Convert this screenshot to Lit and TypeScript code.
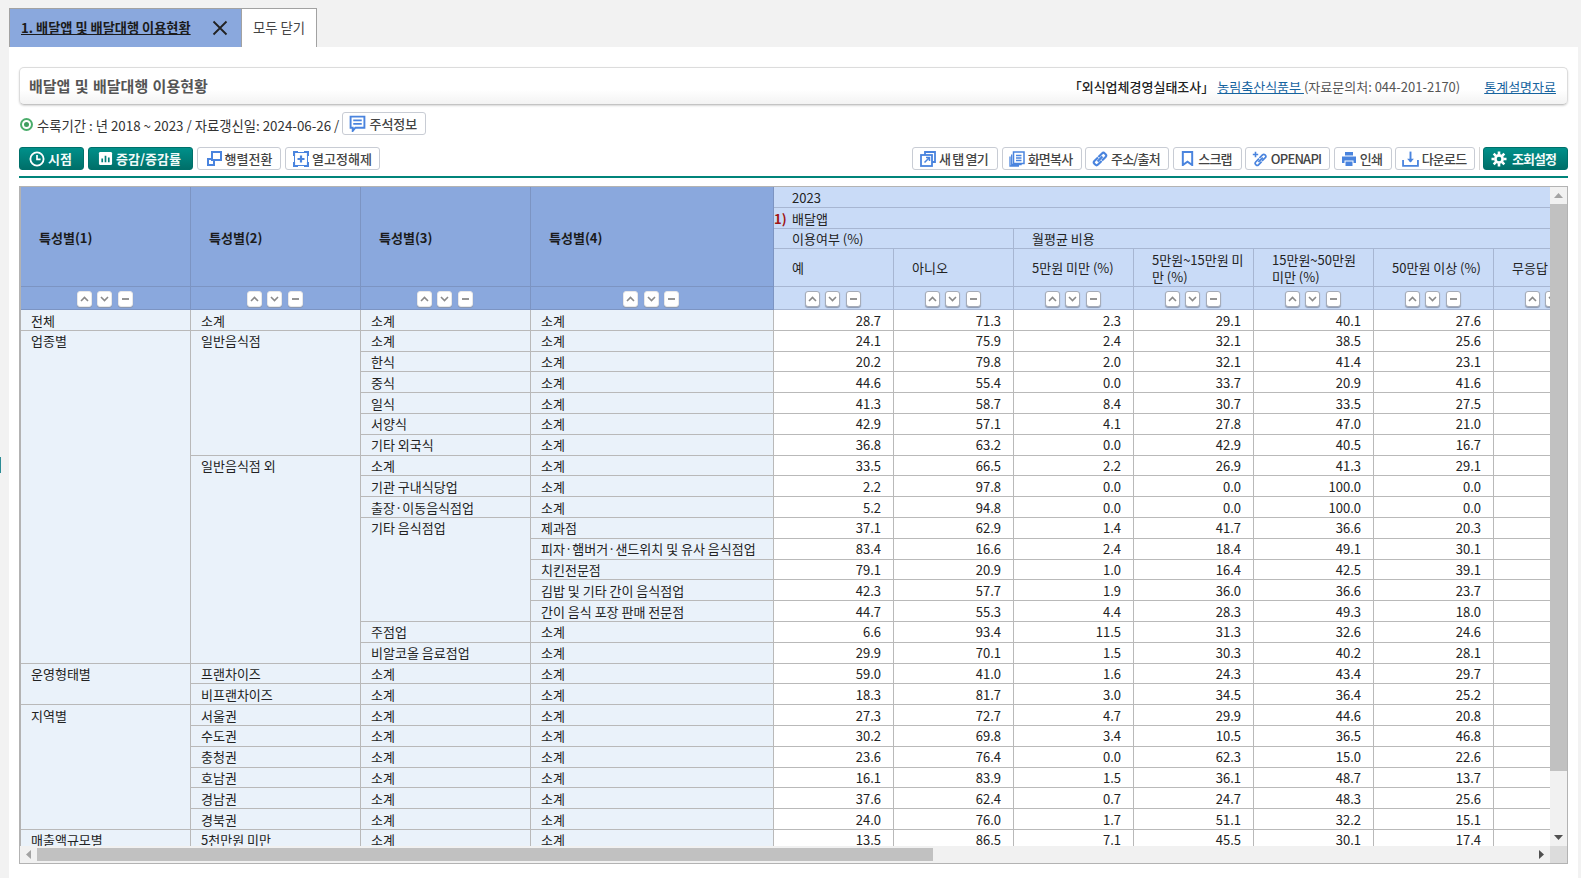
import { LitElement, html, css, svg } from "lit";
import { customElement } from "lit/decorators.js";

type Row = { c1?: [string, number]; c2?: [string, number]; c3?: [string, number]; c4: string; v: string };

const ROWS: Row[] = [
  { c1: ["전체", 1], c2: ["소계", 1], c3: ["소계", 1], c4: "소계", v: "28.7 71.3 2.3 29.1 40.1 27.6" },
  { c1: ["업종별", 16], c2: ["일반음식점", 6], c3: ["소계", 1], c4: "소계", v: "24.1 75.9 2.4 32.1 38.5 25.6" },
  { c3: ["한식", 1], c4: "소계", v: "20.2 79.8 2.0 32.1 41.4 23.1" },
  { c3: ["중식", 1], c4: "소계", v: "44.6 55.4 0.0 33.7 20.9 41.6" },
  { c3: ["일식", 1], c4: "소계", v: "41.3 58.7 8.4 30.7 33.5 27.5" },
  { c3: ["서양식", 1], c4: "소계", v: "42.9 57.1 4.1 27.8 47.0 21.0" },
  { c3: ["기타 외국식", 1], c4: "소계", v: "36.8 63.2 0.0 42.9 40.5 16.7" },
  { c2: ["일반음식점 외", 10], c3: ["소계", 1], c4: "소계", v: "33.5 66.5 2.2 26.9 41.3 29.1" },
  { c3: ["기관 구내식당업", 1], c4: "소계", v: "2.2 97.8 0.0 0.0 100.0 0.0" },
  { c3: ["출장·이동음식점업", 1], c4: "소계", v: "5.2 94.8 0.0 0.0 100.0 0.0" },
  { c3: ["기타 음식점업", 5], c4: "제과점", v: "37.1 62.9 1.4 41.7 36.6 20.3" },
  { c4: "피자·햄버거·샌드위치 및 유사 음식점업", v: "83.4 16.6 2.4 18.4 49.1 30.1" },
  { c4: "치킨전문점", v: "79.1 20.9 1.0 16.4 42.5 39.1" },
  { c4: "김밥 및 기타 간이 음식점업", v: "42.3 57.7 1.9 36.0 36.6 23.7" },
  { c4: "간이 음식 포장 판매 전문점", v: "44.7 55.3 4.4 28.3 49.3 18.0" },
  { c3: ["주점업", 1], c4: "소계", v: "6.6 93.4 11.5 31.3 32.6 24.6" },
  { c3: ["비알코올 음료점업", 1], c4: "소계", v: "29.9 70.1 1.5 30.3 40.2 28.1" },
  { c1: ["운영형태별", 2], c2: ["프랜차이즈", 1], c3: ["소계", 1], c4: "소계", v: "59.0 41.0 1.6 24.3 43.4 29.7" },
  { c2: ["비프랜차이즈", 1], c3: ["소계", 1], c4: "소계", v: "18.3 81.7 3.0 34.5 36.4 25.2" },
  { c1: ["지역별", 6], c2: ["서울권", 1], c3: ["소계", 1], c4: "소계", v: "27.3 72.7 4.7 29.9 44.6 20.8" },
  { c2: ["수도권", 1], c3: ["소계", 1], c4: "소계", v: "30.2 69.8 3.4 10.5 36.5 46.8" },
  { c2: ["충청권", 1], c3: ["소계", 1], c4: "소계", v: "23.6 76.4 0.0 62.3 15.0 22.6" },
  { c2: ["호남권", 1], c3: ["소계", 1], c4: "소계", v: "16.1 83.9 1.5 36.1 48.7 13.7" },
  { c2: ["경남권", 1], c3: ["소계", 1], c4: "소계", v: "37.6 62.4 0.7 24.7 48.3 25.6" },
  { c2: ["경북권", 1], c3: ["소계", 1], c4: "소계", v: "24.0 76.0 1.7 51.1 32.2 15.1" },
  { c1: ["매출액규모별", 1], c2: ["5천만원 미만", 1], c3: ["소계", 1], c4: "소계", v: "13.5 86.5 7.1 45.5 30.1 17.4" },
];

const B = "#4a84de";
const ic = (w: number, body: unknown) =>
  html`<svg class="ic" width=${w} height=${w} viewBox="0 0 16 16" fill="none">${body}</svg>`;

const ICONS: Record<string, unknown> = {
  clock: ic(16, svg`<circle cx="8" cy="8" r="6.6" stroke="#fff" stroke-width="1.8"/><path d="M8 4v4.4h3.6" stroke="#fff" stroke-width="1.7"/>`),
  chart: ic(15, svg`<rect x="1" y="1" width="14" height="14" rx="1.5" fill="#fff"/><path d="M4.500 12V8M8 12V5M11.500 12V7" stroke="#00807a" stroke-width="1.800"/>`),
  pivot: ic(16, svg`<rect x="6" y="1" width="9" height="8" stroke="${B}" stroke-width="2"/><path d="M1 15V7h4v2H3v4h4v-3h2v5z" fill="${B}"/>`),
  unfix: ic(16, svg`<rect x="1.500" y="1.500" width="13" height="13" stroke="${B}" stroke-width="1"/><path d="M1 5V1h4M11 1h4v4M15 11v4h-4M5 15H1v-4" stroke="${B}" stroke-width="2.200"/><path d="M8 4.500v7M4.500 8h7" stroke="${B}" stroke-width="2.200"/>`),
  note: ic(17, svg`<path d="M1.500 1.500h13v10.500H6l-2.500 3v-3h-2z" stroke="${B}" stroke-width="1.800"/><path d="M4 5h8M4 8.400h8" stroke="${B}" stroke-width="1.600"/>`),
  newtab: ic(16, svg`<path d="M5 4V1h10v10h-3" stroke="${B}" stroke-width="1.800"/><rect x="1" y="4" width="11" height="11" stroke="${B}" stroke-width="1.800"/><path d="M4.500 11.500 9 7M6 6.500h3.500V10" stroke="${B}" stroke-width="1.500"/>`),
  copy: ic(16, svg`<rect x="4.500" y="1" width="10.500" height="11.500" stroke="${B}" stroke-width="1.500"/><path d="M2.700 3.500v10h10M1 5.500V15h9" stroke="${B}" stroke-width="1.300"/><path d="M7 4.500h5.500M7 7h5.500M7 9.500h5.500" stroke="${B}" stroke-width="1.300"/>`),
  link: ic(16, svg`<path d="M6.400 6 10 2.400a2 2 0 0 1 2.800 0l.8.8a2 2 0 0 1 0 2.800L10 9.600M9.600 10 6 13.600a2 2 0 0 1-2.800 0l-.8-.8a2 2 0 0 1 0-2.800L6 6.400M5.600 10.400l4.800-4.800" stroke="${B}" stroke-width="2.100"/>`),
  bookmark: ic(15, svg`<path d="M3 1h10v14l-5-3.500L3 15z" stroke="${B}" stroke-width="2.100"/>`),
  api: ic(16, svg`<path d="M7.400 7 10.500 3.900a1.800 1.800 0 0 1 2.500 0l.3.3a1.800 1.800 0 0 1 0 2.500L10 10M9.600 10.600 6.500 13.800a1.800 1.800 0 0 1-2.500 0l-.3-.3a1.800 1.800 0 0 1 0-2.500L7 7.600M6.400 11l4.400-4.400" stroke="${B}" stroke-width="1.700"/><path d="M3.500.8v5.400M.8 3.500h5.400" stroke="${B}" stroke-width="1.600"/>`),
  print: ic(16, svg`<path d="M4 1h8v3.500H4z" fill="${B}"/><path d="M1 5.500h14v6.500h-2.500V9.500h-9V12H1z" fill="${B}"/><path d="M4.500 10.500h7v4.500h-7z" fill="${B}"/>`),
  down: ic(17, svg`<path d="M1 9.500V15h14V9.500" stroke="${B}" stroke-width="1.700"/><path d="M8 1.500v9.500" stroke="${B}" stroke-width="1.800"/><path d="M4.800 8.200 8 11.800l3.200-3.600z" fill="${B}"/>`),
  gear: ic(16, svg`<circle cx="8" cy="8" r="3.600" stroke="#fff" stroke-width="2.600"/><path d="M8 .5v3M8 12.500v3M.5 8h3M12.500 8h3M2.700 2.700l2.100 2.100M11.200 11.200l2.100 2.100M2.700 13.300l2.100-2.100M11.200 4.800l2.100-2.100" stroke="#fff" stroke-width="2.600"/>`),
};

const LEFT = [
  { t: "시점", i: "clock", w: 65, p: true },
  { t: "증감/증감률", i: "chart", w: 105, p: true },
  { t: "행렬전환", i: "pivot", w: 84 },
  { t: "열고정해제", i: "unfix", w: 95 },
];
const RIGHT = [
  { t: "새 탭 열기", i: "newtab", w: 86 },
  { t: "화면복사", i: "copy", w: 80 },
  { t: "주소/출처", i: "link", w: 84 },
  { t: "스크랩", i: "bookmark", w: 69 },
  { t: "OPENAPI", i: "api", w: 85 },
  { t: "인쇄", i: "print", w: 58 },
  { t: "다운로드", i: "down", w: 80 },
];

const sortBtns = html`<span class="sorts">
  <span class="sb"><svg width="9" height="6" viewBox="0 0 9 6"><path d="M1 5 4.500 1.500 8 5" fill="none" stroke="#8a8a8a" stroke-width="1.600"/></svg></span>
  <span class="sb"><svg width="9" height="6" viewBox="0 0 9 6"><path d="M1 1l3.500 3.500L8 1" fill="none" stroke="#8a8a8a" stroke-width="1.600"/></svg></span>
  <span class="sb"><svg width="9" height="4" viewBox="0 0 9 4"><path d="M1 2h7" stroke="#8a8a8a" stroke-width="1.800"/></svg></span>
</span>`;

const cols = ["예", "아니오", "5만원 미만 (%)", html`5만원~15만원 미<br />만 (%)`, html`15만원~50만원<br />미만 (%)`, "50만원 이상 (%)", "무응답 (%)"];

@customElement("app-root")
export class AppRoot extends LitElement {
  static styles = css`
    :host { display: block; height: 878px; background: #f2f2f2; font-family: "Noto Sans CJK KR", "Noto Sans", sans-serif; font-size: 13px; color: #222; overflow: hidden; position: relative; }
    .mark { position: absolute; left: 0; top: 457px; width: 1px; height: 16px; background: #2b8c96; }
    .tabs { display: flex; padding: 8px 0 0 9px; height: 39px; }
    .tab { box-sizing: border-box; height: 39px; display: flex; align-items: center; border: 1px solid #a2a2a2; border-bottom: 0; font-size: 13.33px; line-height: 18px; }
    .tab.on { width: 232px; background: #8aa8dd; padding-left: 11px; font-weight: 700; font-size: 13.2px; color: #1b1b1b; border-right: 0; justify-content: space-between; padding-right: 13px; }
    .tab.on span { text-decoration: underline; }
    .tab.off { width: 76px; background: #fff; color: #444; justify-content: center; }
    .panel { margin: 0 3px 0 9px; background: #fff; height: 831px; padding: 20px 10px 0; box-sizing: border-box; }
    .title { box-sizing: border-box; height: 38px; border: 1px solid #dcdcdc; border-bottom: 1px solid #c4c4c4; border-radius: 5px; background: linear-gradient(#fff 60%, #f3f3f3); box-shadow: 0 1px 2px #d8d8d8; display: flex; align-items: center; padding: 0 11px 0 9px; }
    .title h1 { margin: 0 0 1px; font-size: 15px; word-spacing: 1px; font-weight: 700; color: #555; flex: 1; line-height: 22px; }
    .title .src { font-weight: 500; color: #222; font-size: 13px; white-space: nowrap; }
    .title a { color: #17649f; text-decoration: underline; font-size: 13px; white-space: pre; }
    .title .contact { color: #555; margin-right: 24px; font-size: 13px; }
    .title .first { margin-left: 3px; }
    .info { display: flex; align-items: center; height: 23px; margin-top: 7px; padding-left: 1px; color: #333; font-size: 13.33px; white-space: nowrap; }
    .info .txt { padding-top: 3px; }
    .dot { width: 13px; height: 13px; border-radius: 50%; background: #4bad6b; display: flex; align-items: center; justify-content: center; margin: 2px 4px 0 0; }
    .dot i { display: block; width: 5px; height: 5px; border-radius: 50%; background: #3f9d5f; border: 2px solid #fff; }
    .info .btn { margin-left: 3px; width: 84px; height: 23px; padding-right: 2px; }
    .bar { display: flex; margin-top: 12px; height: 23px; }
    .bar .grp { display: flex; gap: 4px; }
    .bar .grp.r { gap: 3.5px; margin-left: auto; }
    .sep { width: 1px; height: 23px; background: #d6d6d6; margin: 0 3.5px; }
    .btn { box-sizing: border-box; height: 23px; border: 1px solid #c8ccd4; border-radius: 3px; background: #fff; display: inline-flex; align-items: center; justify-content: center; gap: 3px; font-size: 13px; font-weight: 500; color: #444; white-space: nowrap; line-height: 18px; }
    .grp.r .btn { letter-spacing: -0.8px; padding-right: 2px; }
    .btn.p { border-color: #00706a; background: linear-gradient(#00908a, #006f69); color: #f2fbfa; font-weight: 700; gap: 3px; padding-right: 2px; }
    .btn.setting { letter-spacing: -1px; padding-right: 4px; gap: 5px; }
    .ic { flex: none; display: block; }
    .rule { height: 2px; background: #00847a; margin-top: 6px; }
    .box { box-sizing: border-box; margin-top: 8px; height: 678px; border: 1px solid #b3b3b3; display: grid; grid-template-columns: 1fr 17px; grid-template-rows: 659px 17px; }
    .view { overflow: hidden; border-left: 1px solid #b3b3b3; min-width: 0; }
    table { border-collapse: separate; border-spacing: 0; table-layout: fixed; width: 1593px; }
    td, th { box-sizing: border-box; padding: 0; border-right: 1px solid #b9b9b9; border-bottom: 1px solid #b9b9b9; overflow: hidden; white-space: nowrap; font-weight: 400; line-height: 19px; vertical-align: middle; text-align: left; }
    tbody tr { height: 20.8px; }
    td.h, td.n { line-height: 18px; padding-top: 1.5px; vertical-align: top; }
    td.h { background: #eaf2fa; padding-left: 10px; color: #222; }
    td.n { text-align: right; padding-right: 12px; background: #fff; color: #222; font-size: 13px; }
    th.dk { background: #8aa8dd; border-color: #7c94c2; font-weight: 700; padding-left: 18px; padding-top: 2px; color: #1b1b1b; }
    th.lt { background: #c9dbf7; border-color: #a7b6d2; padding-left: 18px; color: #222; }
    th.ctl { padding: 2px 2px 0 0; text-align: center; line-height: 0; }
    th.lbl { line-height: 17px; }
    .r1 { height: 21px; } .r3 { height: 20px; } .r4 { height: 38px; } .r5 { height: 23px; }
    .fn { display: inline-block; width: 18px; margin-left: -18px; color: #a01414; font-weight: 700; }
    .sorts { display: inline-flex; gap: 5.5px; vertical-align: middle; }
    .sb { box-sizing: border-box; width: 15px; height: 16px; background: #fff; border: 1px solid #a6acb8; border-radius: 3px; display: flex; align-items: center; justify-content: center; box-shadow: 0 1px 1px #8a97b0; }
    .dk .sb { border-color: #e8e8e8; }
    .vbar { background: #f1f1f1; display: flex; flex-direction: column; }
    .hbar { background: #f1f1f1; display: flex; align-items: stretch; }
    .arr { flex: none; width: 17px; height: 17px; display: flex; align-items: center; justify-content: center; }
    .vthumb { flex: none; height: 567px; background: #c1c1c1; }
    .vbar .sp, .hbar .sp { flex: 1; }
    .hthumb { flex: none; width: 896px; background: #c1c1c1; margin: 2px 0; }
    .corner { background: #dcdcdc; }
  `;

  render() {
    return html`
      <div class="mark"></div>
      <div class="tabs">
        <div class="tab on"><span>1. 배달앱 및 배달대행 이용현황</span>
          <svg width="16" height="16" viewBox="0 0 16 16"><path d="M1.500 1.500l13 13M14.500 1.500l-13 13" stroke="#222" stroke-width="1.800"/></svg>
        </div>
        <div class="tab off">모두 닫기</div>
      </div>
      <div class="panel">
        <div class="title">
          <h1>배달앱 및 배달대행 이용현황</h1>
          <span class="src">「외식업체경영실태조사」</span>
          <a class="first">농림축산식품부 </a>
          <span class="contact">(자료문의처: 044-201-2170)</span>
          <a>통계설명자료</a>
        </div>
        <div class="info">
          <span class="dot"><i></i></span>
          <span class="txt">수록기간 : 년 2018 ~ 2023 / 자료갱신일: 2024-06-26 /</span>
          <span class="btn">${ICONS.note}주석정보</span>
        </div>
        <div class="bar">
          <div class="grp">
            ${LEFT.map((b) => html`<span class="btn ${b.p ? "p" : ""}" style="width:${b.w}px">${ICONS[b.i]}${b.t}</span>`)}
          </div>
          <div class="grp r">
            ${RIGHT.map((b) => html`<span class="btn" style="width:${b.w}px">${ICONS[b.i]}${b.t}</span>`)}
          </div>
          <span class="sep"></span>
          <span class="btn p setting" style="width:85px">${ICONS.gear}조회설정</span>
        </div>
        <div class="rule"></div>
        <div class="box">
          <div class="view">
            <table>
              <colgroup>
                <col style="width:170px" /><col style="width:170px" /><col style="width:170px" /><col style="width:243px" />
                ${cols.map(() => html`<col style="width:120px" />`)}
              </colgroup>
              <thead>
                <tr class="r1">
                  ${[1, 2, 3, 4].map((n) => html`<th class="dk" rowspan="4">특성별(${n})</th>`)}
                  <th class="lt" colspan="7">2023</th>
                </tr>
                <tr class="r1"><th class="lt" colspan="7"><span class="fn">1)</span>배달앱</th></tr>
                <tr class="r3"><th class="lt" colspan="2">이용여부 (%)</th><th class="lt" colspan="5">월평균 비용</th></tr>
                <tr class="r4">${cols.map((c) => html`<th class="lt lbl">${c}</th>`)}</tr>
                <tr class="r5">
                  ${[1, 2, 3, 4].map(() => html`<th class="dk ctl">${sortBtns}</th>`)}
                  ${cols.map(() => html`<th class="lt ctl">${sortBtns}</th>`)}
                </tr>
              </thead>
              <tbody>
                ${ROWS.map(
                  (r) => html`<tr>
                    ${r.c1 ? html`<td class="h" rowspan=${r.c1[1]}>${r.c1[0]}</td>` : ""}
                    ${r.c2 ? html`<td class="h" rowspan=${r.c2[1]}>${r.c2[0]}</td>` : ""}
                    ${r.c3 ? html`<td class="h" rowspan=${r.c3[1]}>${r.c3[0]}</td>` : ""}
                    <td class="h">${r.c4}</td>
                    ${r.v.split(" ").map((x) => html`<td class="n">${x}</td>`)}
                    <td class="n"></td>
                  </tr>`
                )}
              </tbody>
            </table>
          </div>
          <div class="vbar">
            <span class="arr"><svg width="9" height="5" viewBox="0 0 9 5"><path d="M4.500 0 9 5H0z" fill="#a3a3a3"/></svg></span>
            <span class="vthumb"></span>
            <span class="sp"></span>
            <span class="arr"><svg width="9" height="5" viewBox="0 0 9 5"><path d="M0 0h9L4.500 5z" fill="#505050"/></svg></span>
          </div>
          <div class="hbar">
            <span class="arr"><svg width="5" height="9" viewBox="0 0 5 9"><path d="M5 0v9L0 4.500z" fill="#a3a3a3"/></svg></span>
            <span class="hthumb"></span>
            <span class="sp"></span>
            <span class="arr"><svg width="5" height="9" viewBox="0 0 5 9"><path d="M0 0v9l5-4.500z" fill="#505050"/></svg></span>
          </div>
          <div class="corner"></div>
        </div>
      </div>
    `;
  }
}
